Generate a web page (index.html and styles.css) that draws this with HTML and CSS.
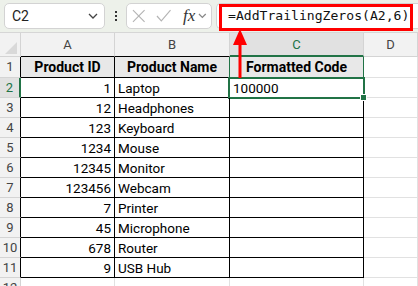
FILE: index.html
```html
<!DOCTYPE html>
<html lang="en">

<head>
    <meta charset="UTF-8">
    <meta name="viewport" content="width=device-width, initial-scale=1.0">
    <title>AddTrailingZeros</title>
    <link rel="stylesheet" href="styles.css">
</head>

<body>
    <div class="topbar">
        <div class="namebox">
            <span>C2</span>
            <svg class="chev" width="10" height="6" viewBox="0 0 10 6"><polyline points="1,1 5,5 9,1" /></svg>
        </div>
        <div class="dots"><i></i><i></i><i></i></div>
        <div class="fxbox">
            <svg class="tool" width="14" height="14" viewBox="0 0 14 14"><path d="M1 1 L13 13 M13 1 L1 13" /></svg>
            <svg class="tool" width="16" height="14" viewBox="0 0 16 14"><polyline points="1,7 5.5,12 15,1" /></svg>
            <span class="fx">fx</span>
            <svg class="chev small" width="9" height="6" viewBox="0 0 9 6"><polyline points="1,1 4.5,4.5 8,1" /></svg>
        </div>
        <div class="formula">=AddTrailingZeros(A2,6)</div>
    </div>

    <div class="sheet">
        <div class="cell corner"><span class="tri"></span></div>
        <div class="cell hd">A</div>
        <div class="cell hd">B</div>
        <div class="cell hd active">C</div>
        <div class="cell hd">D</div>

        <div class="cell rh">1</div>
        <div class="cell tb title">Product ID</div>
        <div class="cell tb title before-c1">Product Name</div>
        <div class="cell tb title c1">Formatted Code</div>
        <div class="cell"></div>

        <div class="cell rh active">2</div>
        <div class="cell tb num">1</div>
        <div class="cell tb">Laptop</div>
        <div class="cell tb selected">100000</div>
        <div class="cell"></div>

        <div class="cell rh">3</div>
        <div class="cell tb num">12</div>
        <div class="cell tb">Headphones</div>
        <div class="cell tb"></div>
        <div class="cell"></div>

        <div class="cell rh">4</div>
        <div class="cell tb num">123</div>
        <div class="cell tb">Keyboard</div>
        <div class="cell tb"></div>
        <div class="cell"></div>

        <div class="cell rh">5</div>
        <div class="cell tb num">1234</div>
        <div class="cell tb">Mouse</div>
        <div class="cell tb"></div>
        <div class="cell"></div>

        <div class="cell rh">6</div>
        <div class="cell tb num">12345</div>
        <div class="cell tb">Monitor</div>
        <div class="cell tb"></div>
        <div class="cell"></div>

        <div class="cell rh">7</div>
        <div class="cell tb num">123456</div>
        <div class="cell tb">Webcam</div>
        <div class="cell tb"></div>
        <div class="cell"></div>

        <div class="cell rh">8</div>
        <div class="cell tb num">7</div>
        <div class="cell tb">Printer</div>
        <div class="cell tb"></div>
        <div class="cell"></div>

        <div class="cell rh">9</div>
        <div class="cell tb num">45</div>
        <div class="cell tb">Microphone</div>
        <div class="cell tb"></div>
        <div class="cell"></div>

        <div class="cell rh">10</div>
        <div class="cell tb num">678</div>
        <div class="cell tb">Router</div>
        <div class="cell tb"></div>
        <div class="cell"></div>

        <div class="cell rh">11</div>
        <div class="cell tb num">9</div>
        <div class="cell tb">USB Hub</div>
        <div class="cell tb"></div>
        <div class="cell"></div>

        <div class="cell rh plain">12</div>
        <div class="cell"></div>
        <div class="cell"></div>
        <div class="cell"></div>
        <div class="cell"></div>
    </div>

    <!-- annotation: red box round the formula and arrow down to C1 -->
    <div class="callout-box"></div>
    <svg class="callout-arrow" width="16" height="52" viewBox="0 0 16 52">
        <polygon points="8,1 1,17 15,17" />
        <rect x="6.5" y="16" width="3" height="34" />
    </svg>
</body>

</html>
```

FILE: styles.css
```css
:root {
    --excel-green: #217346;
    --grid-line: #e1e1e1;
    --header-bg: #f2f2f2;
    --header-line: #d4d4d4;
    --bar-bg: #edf1ea;
}

body {
    margin: 0;
    font-family: 'Roboto', 'Liberation Sans', sans-serif;
    color: #000;
    background-color: #fff;
    overflow: hidden;
}

/* ---- formula bar ---- */

.topbar {
    display: flex;
    align-items: center;
    height: 33px;
    padding: 0 0 0 4px;
    box-sizing: border-box;
    background-color: var(--bar-bg);
    border-bottom: 1px solid #d6d6d6;
}

.namebox {
    display: flex;
    align-items: center;
    justify-content: space-between;
    width: 101px;
    height: 26px;
    padding: 0 6px 0 7px;
    box-sizing: border-box;
    background-color: #fff;
    border: 1px solid #d3d3d3;
    border-radius: 5px;
    font-size: 14px;
    color: #222;
}

.chev polyline {
    fill: none;
    stroke: #444;
    stroke-width: 1.3;
}

.chev.small polyline {
    stroke: #888;
}

.dots {
    display: flex;
    flex-direction: column;
    gap: 2px;
    width: 21px;
    align-items: center;
}

.dots i {
    width: 2px;
    height: 2px;
    background-color: #333;
}

.fxbox {
    display: flex;
    align-items: center;
    gap: 10px;
    width: 86px;
    height: 26px;
    padding: 0 4px 0 5px;
    box-sizing: border-box;
    background-color: #fff;
    border: 1px solid #d3d3d3;
    border-radius: 5px;
}

.tool path,
.tool polyline {
    fill: none;
    stroke: #b4b4b4;
    stroke-width: 1.2;
}

.fx {
    font-family: 'Liberation Serif', serif;
    font-style: italic;
    font-size: 17px;
    color: #333;
    margin-left: 2px;
    margin-right: -7px;
}

.formula {
    flex: 1;
    height: 26px;
    margin-left: 4px;
    padding-left: 11px;
    box-sizing: border-box;
    background-color: #fff;
    border: 1px solid #d3d3d3;
    border-right: none;
    border-radius: 5px 0 0 5px;
    font-family: 'DejaVu Sans Mono', 'Liberation Mono', monospace;
    font-size: 13.1px;
    line-height: 24px;
    color: #111;
    white-space: nowrap;
}

/* ---- sheet ---- */

.sheet {
    display: grid;
    grid-template-columns: 21px 94px 115px 134px 1fr;
    grid-template-rows: 24px 21px repeat(11, 20px);
}

.cell {
    position: relative;
    box-sizing: border-box;
    padding: 0 3px;
    border-right: 1px solid var(--grid-line);
    border-bottom: 1px solid var(--grid-line);
    font-size: 13.5px;
    line-height: 20px;
    white-space: nowrap;
    overflow: visible;
}

.corner {
    background-color: var(--header-bg);
    border-color: var(--header-line);
}

.tri {
    position: absolute;
    right: 3px;
    bottom: 2px;
    width: 0;
    height: 0;
    border-left: 12px solid transparent;
    border-bottom: 12px solid #d9d9d9;
}

.hd {
    background-color: var(--header-bg);
    border-color: var(--header-line);
    text-align: center;
    color: #444;
    font-size: 13px;
    line-height: 24px;
}

.hd:nth-child(2),
.hd:nth-child(3) {
    border-bottom-color: #000;
}

.hd.active {
    background-color: #e1e1e1;
    color: var(--excel-green);
    border-bottom: 2px solid var(--excel-green);
}

.rh {
    background-color: var(--header-bg);
    border-color: var(--header-line);
    border-right-color: #000;
    padding: 0;
    text-align: center;
    color: #444;
    font-size: 13px;
}

.rh.plain {
    border-right-color: var(--header-line);
}

.rh.active {
    background-color: #e1e1e1;
    color: var(--excel-green);
    border-right: 2px solid var(--excel-green);
}

.tb {
    border-color: #000;
}

.title {
    background-color: #e8e8e8;
    font-weight: bold;
    text-align: center;
    line-height: 21px;
    font-size: 14px;
}

.before-c1 {
    border-right-color: var(--excel-green);
}

.c1 {
    border-right-color: var(--excel-green);
}

.num {
    text-align: right;
}

.selected::after {
    content: "";
    position: absolute;
    top: -1px;
    left: -2px;
    right: -2px;
    bottom: -2px;
    border: 2px solid var(--excel-green);
}

.selected::before {
    content: "";
    position: absolute;
    right: -4px;
    bottom: -4px;
    width: 5px;
    height: 5px;
    background-color: var(--excel-green);
    border: 1px solid #fff;
    z-index: 1;
}

/* ---- annotation ---- */

.callout-box {
    position: absolute;
    left: 219px;
    top: 4px;
    width: 194px;
    height: 27px;
    box-sizing: border-box;
    border: 3px solid #f00;
}

.callout-arrow {
    position: absolute;
    left: 232px;
    top: 28px;
}

.callout-arrow polygon,
.callout-arrow rect {
    fill: #f00;
}
```
